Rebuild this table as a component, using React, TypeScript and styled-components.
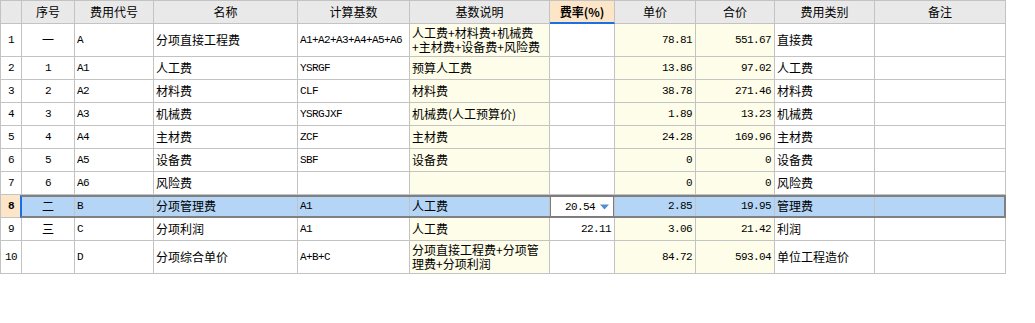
import React from 'react';
import styled, { createGlobalStyle } from 'styled-components';

const LINE = '#c3c3c3';
const YELLOW = '#fefde9';
const SELECT = '#b4d5f6';
const HEAD = '#e9e9e9';
const ORANGE = '#fde5c7';

const COLS = [21, 53, 79, 144, 112, 140, 65, 81, 79, 100, 131];
const TEMPLATE = COLS.map((c) => `${c}px`).join(' ');

const Global = createGlobalStyle`
  html, body { margin: 0; padding: 0; background: #fff; }
  body {
    font-family: "Noto Sans CJK SC", "Noto Sans", sans-serif;
    font-size: 12px;
    color: #000;
  }
`;

const Sheet = styled.div`
  width: 1006px;
  box-sizing: border-box;
  border-left: 1px solid ${LINE};
  border-top: 1px solid ${LINE};
`;

const Row = styled.div<{ $h: number }>`
  position: relative;
  display: grid;
  grid-template-columns: ${TEMPLATE};
  height: ${(p) => p.$h}px;
`;

type Align = 'left' | 'center' | 'right';

const Cell = styled.div<{ $align?: Align; $bg?: string; $bold?: boolean }>`
  position: relative;
  box-sizing: border-box;
  border-right: 1px solid ${LINE};
  border-bottom: 1px solid ${LINE};
  display: flex;
  align-items: center;
  justify-content: ${(p) =>
    p.$align === 'center' ? 'center' : p.$align === 'right' ? 'flex-end' : 'flex-start'};
  padding: 0 ${(p) => (p.$align === 'right' ? '3px' : '2px')};
  overflow: hidden;
  white-space: nowrap;
  line-height: 14px;
  background: ${(p) => p.$bg ?? '#fff'};
  font-weight: ${(p) => (p.$bold ? 700 : 400)};
`;

const HeadCell = styled(Cell)<{ $accent?: boolean }>`
  background: ${(p) => (p.$accent ? ORANGE : HEAD)};
  border-bottom: ${(p) => (p.$accent ? '2px solid #1b6fe4' : `1px solid ${LINE}`)};
  font-weight: ${(p) => (p.$accent ? 700 : 400)};
  padding-bottom: ${(p) => (p.$accent ? '0' : '1px')};
`;

const Mono = styled.span<{ $bold?: boolean }>`
  font-family: "Liberation Mono", "DejaVu Sans Mono", monospace;
  font-size: 11px;
  letter-spacing: -0.6px;
  font-weight: ${(p) => (p.$bold ? 700 : 400)};
`;

const Lines = styled.div`
  display: flex;
  flex-direction: column;
  line-height: 14px;
`;

const Selection = styled.div`
  position: absolute;
  left: 19px;
  top: 0;
  width: 986px;
  height: 23px;
  box-sizing: border-box;
  border: 2px solid #808080;
  border-left-color: #1b6fe4;
  pointer-events: none;
  z-index: 1;
`;

const Editor = styled.div`
  position: absolute;
  left: -1px;
  top: 0;
  width: 66px;
  height: 23px;
  box-sizing: border-box;
  border: 2px solid #7c7c7c;
  background: #fff;
  display: flex;
  align-items: center;
  justify-content: flex-end;
  gap: 5px;
  padding-right: 4px;
  z-index: 2;
`;

const DropArrow = () => (
  <svg width="9" height="6" viewBox="0 0 9 6" aria-hidden="true">
    <path d="M0 0.5 L9 0.5 L4.5 5.5 Z" fill="#4f8fcf" />
  </svg>
);

type RowData = {
  num: string;
  seq: string;
  code: string;
  name: string;
  base: string;
  desc: string[];
  rate: string;
  price: string;
  total: string;
  kind: string;
  note: string;
  h: number;
  selected?: boolean;
};

const rows: RowData[] = [
  { num: '1', seq: '一', code: 'A', name: '分项直接工程费', base: 'A1+A2+A3+A4+A5+A6', desc: ['人工费+材料费+机械费', '+主材费+设备费+风险费'], rate: '', price: '78.81', total: '551.67', kind: '直接费', note: '', h: 33 },
  { num: '2', seq: '1', code: 'A1', name: '人工费', base: 'YSRGF', desc: ['预算人工费'], rate: '', price: '13.86', total: '97.02', kind: '人工费', note: '', h: 23 },
  { num: '3', seq: '2', code: 'A2', name: '材料费', base: 'CLF', desc: ['材料费'], rate: '', price: '38.78', total: '271.46', kind: '材料费', note: '', h: 23 },
  { num: '4', seq: '3', code: 'A3', name: '机械费', base: 'YSRGJXF', desc: ['机械费(人工预算价)'], rate: '', price: '1.89', total: '13.23', kind: '机械费', note: '', h: 23 },
  { num: '5', seq: '4', code: 'A4', name: '主材费', base: 'ZCF', desc: ['主材费'], rate: '', price: '24.28', total: '169.96', kind: '主材费', note: '', h: 23 },
  { num: '6', seq: '5', code: 'A5', name: '设备费', base: 'SBF', desc: ['设备费'], rate: '', price: '0', total: '0', kind: '设备费', note: '', h: 23 },
  { num: '7', seq: '6', code: 'A6', name: '风险费', base: '', desc: [], rate: '', price: '0', total: '0', kind: '风险费', note: '', h: 23 },
  { num: '8', seq: '二', code: 'B', name: '分项管理费', base: 'A1', desc: ['人工费'], rate: '20.54', price: '2.85', total: '19.95', kind: '管理费', note: '', h: 23, selected: true },
  { num: '9', seq: '三', code: 'C', name: '分项利润', base: 'A1', desc: ['人工费'], rate: '22.11', price: '3.06', total: '21.42', kind: '利润', note: '', h: 23 },
  { num: '10', seq: '', code: 'D', name: '分项综合单价', base: 'A+B+C', desc: ['分项直接工程费+分项管', '理费+分项利润'], rate: '', price: '84.72', total: '593.04', kind: '单位工程造价', note: '', h: 33 },
];

const headers = ['', '序号', '费用代号', '名称', '计算基数', '基数说明', '费率(%)', '单价', '合价', '费用类别', '备注'];

const isAscii = (s: string) => /^[\x00-\x7f]*$/.test(s);

const Text = ({ value }: { value: string }) =>
  isAscii(value) ? <Mono>{value}</Mono> : <>{value}</>;

const DataRow = ({ r }: { r: RowData }) => {
  const sel = r.selected;
  const bgWhite = sel ? SELECT : '#fff';
  const bgYellow = sel ? SELECT : YELLOW;
  return (
    <Row $h={r.h}>
      <Cell $align="center" $bg={sel ? ORANGE : '#fff'}>
        <Mono $bold={sel}>{r.num}</Mono>
      </Cell>
      <Cell $align="center" $bg={bgWhite}>
        <Text value={r.seq} />
      </Cell>
      <Cell $bg={bgWhite}>
        <Mono>{r.code}</Mono>
      </Cell>
      <Cell $bg={bgWhite}>{r.name}</Cell>
      <Cell $bg={bgWhite}>
        <Mono>{r.base}</Mono>
      </Cell>
      <Cell $bg={bgYellow}>
        <Lines>
          {r.desc.map((d) => (
            <span key={d}>{d}</span>
          ))}
        </Lines>
      </Cell>
      <Cell $align="right" $bg={bgWhite}>
        {sel ? (
          <Editor>
            <Mono>{r.rate}</Mono>
            <DropArrow />
          </Editor>
        ) : (
          <Mono>{r.rate}</Mono>
        )}
      </Cell>
      <Cell $align="right" $bg={bgYellow}>
        <Mono>{r.price}</Mono>
      </Cell>
      <Cell $align="right" $bg={bgYellow}>
        <Mono>{r.total}</Mono>
      </Cell>
      <Cell $bg={bgWhite}>{r.kind}</Cell>
      <Cell $bg={bgWhite}>{r.note}</Cell>
      {sel && <Selection />}
    </Row>
  );
};

export default function App() {
  return (
    <>
      <Global />
      <Sheet>
        <Row $h={23}>
          {headers.map((h, i) => (
            <HeadCell key={i} $align="center" $accent={i === 6}>
              {h}
            </HeadCell>
          ))}
        </Row>
        {rows.map((r) => (
          <DataRow key={r.num} r={r} />
        ))}
      </Sheet>
    </>
  );
}
